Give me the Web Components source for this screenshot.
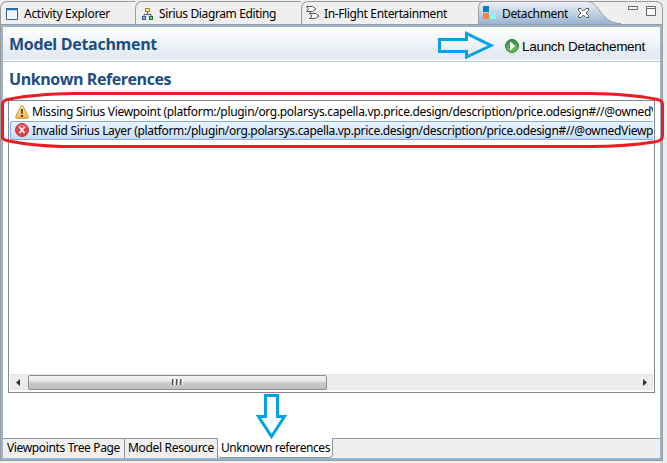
<!DOCTYPE html>
<html lang="en"><head><meta charset="utf-8"><title>Detachment</title>
<style>body{margin:0;width:667px;height:463px;overflow:hidden;background:#efefef;font:12px/16px "Noto Sans","Open Sans",sans-serif;color:#000}</style></head>
<body><detachment-window></detachment-window>
<script>
const define=(name,html,ready)=>customElements.define(name,class extends HTMLElement{
  connectedCallback(){if(this.shadowRoot)return;const r=this.attachShadow({mode:'open'});const t=document.createElement('template');t.innerHTML=html;r.append(t.content.cloneNode(true));if(ready)ready.call(this,r);}
});
/* Single-line label whose tracking is spread over the width given in "w". */
define('fit-label','<style>:host{display:block;white-space:nowrap;flex:none}span{display:inline-block}</style><span><slot></slot></span>',function(r){
  const w=+this.getAttribute('w'),s=r.querySelector('span'),n=this.textContent.length;
  s.style.letterSpacing=((w-s.getBoundingClientRect().width)/n)+'px';
  this.style.width=w+'px';
});
const icons={
 page:'<path d="M.5 1.500h11v11H.5z" fill="#edf6fd" stroke="#465f78"/><path d="M0 2h12" stroke="#2d6db0" stroke-width="2"/><path d="M1 3.500h10" stroke="#b9d6ef"/>',
 tree:'<path d="M6.5 5v3M3 10V7.5h7V10" fill="none" stroke="#52616f"/><rect x="4.5" y="1.5" width="4" height="3" fill="#ffe08a" stroke="#b98213"/><rect x="1.500" y="9.5" width="3" height="3" fill="#a9bfe8" stroke="#32548f"/><rect x="8.500" y="9.5" width="3" height="3" fill="#86c78d" stroke="#236d35"/>',
 flow:'<path d="M.5 .5h6l3.500 2.500L6.500 5.500H.5L2.500 3zM3.500 7.500h6L13 10l-3.500 2.500h-6L6 10z" fill="#fff" stroke="#555"/><path d="M4 5.500v2" stroke="#555"/>',
 blocks:'<path d="M0 0h6v6H0z" fill="#0b7dbc"/><path d="M0 7h6v6H0z" fill="#ff7f45"/><path d="M7 7h6v6H7z" fill="#7fffff"/>',
 close:'<path d="M.5 1.5h2.500L5.500 4 8 1.500h2.500v2L8 6l2.500 2.500v2H8L5.500 8 3 10.500H.5v-2L3 6 .5 3.500z" fill="#fff" stroke="#555"/>',
 run:'<defs><linearGradient id="g" x2="0" y2="1"><stop stop-color="#2d8b43"/><stop offset="1" stop-color="#79bd62"/></linearGradient></defs><circle cx="7" cy="7" r="6.500" fill="url(#g)" stroke="#327e3e"/><path d="M5 2.500L10.500 7 5 11.500z" fill="#fff"/>',
 warn:'<defs><linearGradient id="w" x2="0" y2="1"><stop stop-color="#fff0bc"/><stop offset="1" stop-color="#f1b33e"/></linearGradient></defs><path d="M7 .7Q8 .5 8.500 2L13.300 11.500Q13.500 13.300 12 13.300H2Q.4 13.300.7 11.500L5.500 2Q6 .7 7 .7z" fill="url(#w)" stroke="#c89343"/><path d="M6 4h2l-.4 5H6.400zM6 10h2v2H6z" fill="#4d3510"/>',
 error:'<circle cx="7" cy="7" r="6.500" fill="#df4147" stroke="#b73b42"/><path d="M3 3.500Q7 1 11 3.500" fill="none" stroke="#f49a9b"/><path d="M4.500 4l5 6M9.500 4l-5 6" stroke="#fff" stroke-width="1.700"/>'};
define('ui-icon','<style>:host{display:block;width:14px;height:14px;flex:none}svg{display:block}</style><svg width="14" height="14" viewBox="0 0 14 14"></svg>',function(r){r.querySelector('svg').innerHTML=icons[this.getAttribute('name')]});
define('editor-tab',`<style>:host{display:flex;box-sizing:border-box;height:23px;padding:4px 0 0 5px;border-top:1px solid #9c9c9c;border-left:1px solid #9c9c9c;border-radius:7px 0 0 0;flex:none}</style><slot name="icon"></slot><slot></slot>`);
define('editor-tabs',`<style>
:host{display:flex;position:relative;height:24px;padding-top:1px;box-sizing:border-box}
editor-tab{gap:4px}.a{width:135px}.b{width:166px}.c{width:177px}.a ui-icon,.b ui-icon{margin-top:1px}
.c{padding-left:4px}
.d{flex:1;border-left:0;border-radius:0 7px 0 0;border-right:1px solid #9c9c9c;position:relative;padding-left:5px;gap:5px}
.bg{position:absolute;left:478px;top:0}.w{position:absolute;right:1px;top:5px}
ui-icon.x{width:12px;margin:1px 0 0 5px}
</style>
<svg class="bg" width="144" height="24"><defs><linearGradient id="t" x2="0" y2="1"><stop stop-color="#eef2f7"/><stop offset="1" stop-color="#99b4d1"/></linearGradient></defs><path d="M.5 24V8Q.5 1.500 7 1.500H109C122 1.500 122 23.500 143 23.500V24z" fill="url(#t)"/><path d="M.5 24V8Q.5 1.500 7 1.500H109C122 1.500 122 23.500 143 23.500" fill="none" stroke="#9c9c9c"/></svg>
<editor-tab class="a"><ui-icon slot="icon" name="page"></ui-icon><fit-label w="86">Activity Explorer</fit-label></editor-tab>
<editor-tab class="b"><ui-icon slot="icon" name="tree"></ui-icon><fit-label w="117">Sirius Diagram Editing</fit-label></editor-tab>
<editor-tab class="c"><ui-icon slot="icon" name="flow"></ui-icon><fit-label w="123">In-Flight Entertainment</fit-label></editor-tab>
<editor-tab class="d"><ui-icon slot="icon" name="blocks"></ui-icon><fit-label w="66">Detachment</fit-label><ui-icon class="x" name="close"></ui-icon></editor-tab>
<svg class="w" width="34" height="13"><path d="M.5 1.500h9v3h-9zM18.500 1.500h9v9h-9zM18.500 3.500h9" fill="#fff" stroke="#666"/></svg>`);
define('form-header',`<style>:host{display:flex;box-sizing:border-box;height:35px;background:linear-gradient(#fff,#e1e8f1 32px,#fff 33px);border-bottom:1px solid #b4c6de;padding:7px 15px 0 6px;justify-content:space-between}
b{font:bold 16px/20px "Open Sans",sans-serif;color:#1c4e83}.r{display:flex;gap:3px;padding-top:5px}.r fit-label{font:13.5px/16px "Liberation Sans",sans-serif}</style>
<b><fit-label w="148">Model Detachment</fit-label></b><div class="r"><ui-icon name="run"></ui-icon><fit-label w="123">Launch Detachement</fit-label></div>`);
define('list-row',`<style>:host{display:flex;box-sizing:border-box;height:19px;padding:2px 0 0 4px;gap:3px;overflow:hidden;border:1px solid transparent;border-right:0}:host([selected]){padding-left:4px;background:linear-gradient(#eaf3fd,#c5ddfa);border-color:#84acdd;border-radius:3px 0 0 3px}::slotted(fit-label){margin-top:-1px}:host([selected]) ::slotted(ui-icon){margin-top:-1px}</style><slot name="icon"></slot><slot></slot>`);
define('scroll-bar',`<style>:host{display:flex;height:16px;background:#ececec;box-sizing:border-box;border:1px solid #e4e4e4;border-left:0;align-items:center}.t{width:297px;height:13px;border:1px solid #8d8d8d;border-radius:2px;background:linear-gradient(#f4f4f4,#e4e4e4 45%,#cacaca 50%,#c0c0c0);display:flex;align-items:center;justify-content:center;gap:1px}i{width:1px;height:6px;border-left:1px solid #555;border-right:1px solid #fff;margin-top:-1px;background:#aaa}.l,.r{width:18px;height:14px}.r{margin-left:auto}</style>
<svg class="l"><path d="M10 4v7L6 7.500z" fill="#333"/></svg><div class="t"><i></i><i></i><i></i></div><svg class="r"><path d="M9 4v7l4-3.500z" fill="#333"/></svg>`);
define('issue-list',`<style>:host{display:flex;flex-direction:column;box-sizing:border-box;width:647px;height:293px;border:1px solid #828790;padding:1px;background:#fff}scroll-bar{margin-top:auto;margin-bottom:1px}</style>
<list-row><ui-icon slot="icon" name="warn"></ui-icon><fit-label w="626">Missing Sirius Viewpoint (platform:/plugin/org.polarsys.capella.vp.price.design/description/price.odesign#//@ownedV</fit-label></list-row>
<list-row selected><ui-icon slot="icon" name="error"></ui-icon><fit-label w="628">Invalid Sirius Layer (platform:/plugin/org.polarsys.capella.vp.price.design/description/price.odesign#//@ownedViewpo</fit-label></list-row><scroll-bar></scroll-bar>`);
define('page-tabs',`<style>:host{display:flex;height:20px}div{box-sizing:border-box;height:20px;padding:1px 0 0 4px;border:solid #949494;border-width:1px 1px 0 0;background:#efefef}.a{width:122px}.b{width:93px;padding-left:3px}.c{width:115px;border-top:0;border-bottom:1px solid #949494;background:#fff;border-radius:0 0 4px 4px;padding:2px 0 0 3px}.d{flex:1;border-right:0}</style>
<div class="a"><fit-label w="113">Viewpoints Tree Page</fit-label></div><div class="b"><fit-label w="86">Model Resource</fit-label></div><div class="c"><fit-label w="109">Unknown references</fit-label></div><div class="d"></div>`);
define('callout-marks',`<style>:host{position:absolute;left:0;top:0;width:667px;height:463px;pointer-events:none}svg{display:block}</style><svg width="667" height="463" fill="none" stroke-width="3"><path d="M75 93.500H590C620 94 640 96 655 99Q662.500 100 662.500 104V136Q662.500 141 654 142C635 145 610 146.500 590 146.500H62C42 146 24 144 9 141Q2.500 140 2.500 137V104Q2.500 100 10 99C25 96 45 94 75 93.500z" stroke="#ed1c24"/><path d="M439.500 39.500H466.500V33.500L491 45.500 466.500 57V51.500H439.500zM265.500 395.500H277.500V416.500H284.500L271.500 436.500 258.500 416.500H265.500z" stroke="#00a2e8"/></svg>`);
define('detachment-window',`<style>:host{display:block;position:relative;width:667px;height:463px}.win{width:663px;height:461px;box-sizing:border-box}
.frame{box-sizing:border-box;height:437px;border:1px solid #9c9c9c}.blue{box-sizing:border-box;height:435px;border:2px solid #99b4d1;background:#fff;display:flex;flex-direction:column}
h2{margin:7px 0 11px 6px;font:bold 16px/20px "Open Sans",sans-serif;height:20px;color:#1c4e83}issue-list{margin-left:5px}page-tabs{margin-top:auto}</style>
<div class="win"><editor-tabs></editor-tabs><div class="frame"><div class="blue"><form-header></form-header><h2><fit-label w="162">Unknown References</fit-label></h2><issue-list></issue-list><page-tabs></page-tabs></div></div></div><callout-marks></callout-marks>`);
</script></body></html>
